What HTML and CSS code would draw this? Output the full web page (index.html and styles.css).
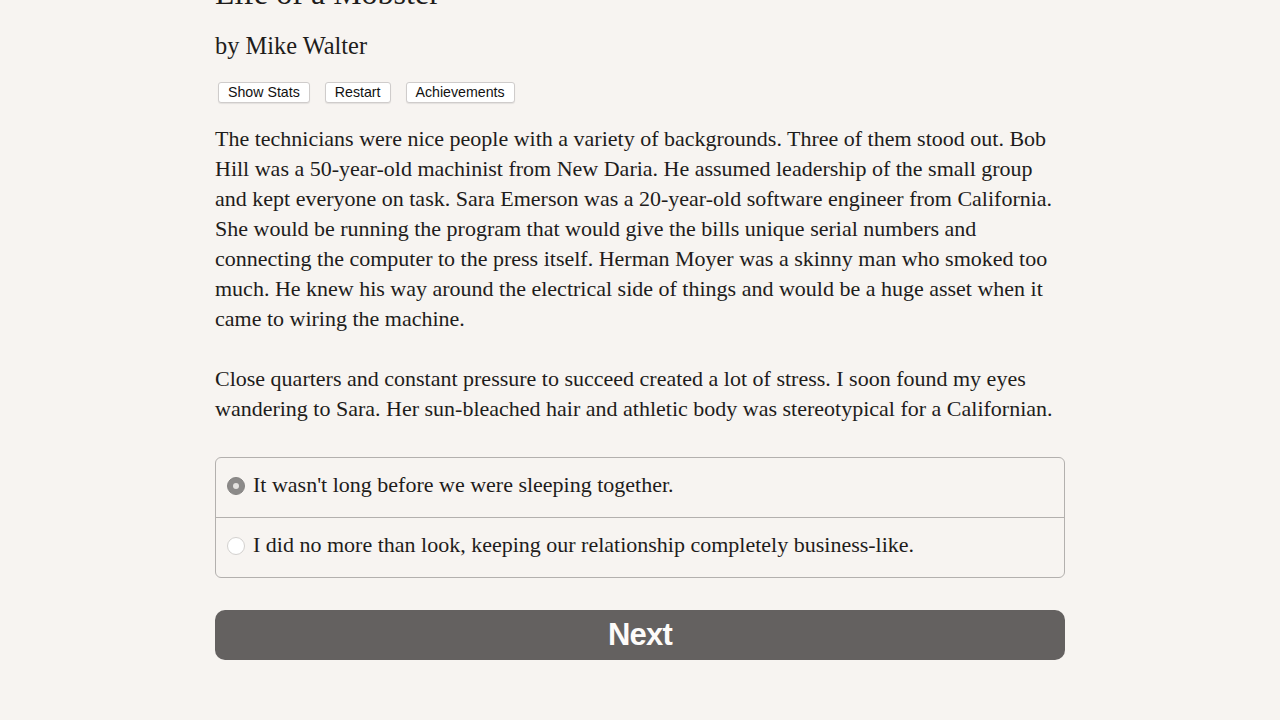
FILE: index.html
```html
<!DOCTYPE html>
<html>
<head>
<meta charset="utf-8">
<link rel="stylesheet" href="styles.css">
</head>
<body>
<div class="page">
  <h1 class="title">Life of a Mobster</h1>
  <h2 class="author">by Mike Walter</h2>
  <div class="toolbar">
    <button class="tbtn">Show Stats</button>
    <button class="tbtn">Restart</button>
    <button class="tbtn">Achievements</button>
  </div>
  <div class="story">
    <p>The technicians were nice people with a variety of backgrounds. Three of them stood out. Bob Hill was a 50-year-old machinist from New Daria. He assumed leadership of the small group and kept everyone on task. Sara Emerson was a 20-year-old software engineer from California. She would be running the program that would give the bills unique serial numbers and connecting the computer to the press itself. Herman Moyer was a skinny man who smoked too much. He knew his way around the electrical side of things and would be a huge asset when it came to wiring the machine.</p>
    <p>Close quarters and constant pressure to succeed created a lot of stress. I soon found my eyes wandering to Sara. Her sun-bleached hair and athletic body was stereotypical for a Californian.</p>
  </div>
  <div class="choices">
    <label class="choice"><span class="radio checked"></span><span>It wasn't long before we were sleeping together.</span></label>
    <label class="choice"><span class="radio"></span><span>I did no more than look, keeping our relationship completely business-like.</span></label>
  </div>
  <button class="next">Next</button>
</div>
</body>
</html>
```

FILE: styles.css
```css
html, body {
  margin: 0;
  padding: 0;
  background: #f7f4f1;
}
body {
  font-family: "Liberation Serif", serif;
  color: #1e1c1b;
}
.page {
  width: 850px;
  margin: 0 auto;
}
.title {
  font-size: 32px;
  font-weight: normal;
  margin: -25px 0 0 0;
  line-height: 36px;
  height: 36px;
}
.author {
  font-size: 24.4px;
  font-weight: normal;
  margin: 22px 0 0 0;
  line-height: 26px;
}
.toolbar {
  display: flex;
  gap: 15px;
  margin: 23px 0 0 3px;
}
.tbtn {
  font-family: "Liberation Sans", sans-serif;
  font-size: 14.2px;
  color: #111;
  background: #fff;
  border: 1px solid #cfcccb;
  border-radius: 3px;
  height: 21px;
  padding: 0 9px;
  line-height: 19px;
  box-shadow: 0 1px 1px rgba(0,0,0,0.08);
}
.story {
  margin-top: 21px;
  font-size: 22px;
  line-height: 30px;
}
.story p {
  margin: 0 0 30px 0;
}
.choices {
  border: 1px solid #b3b0ae;
  border-radius: 6px;
  margin-top: 33px;
}
.choice {
  display: flex;
  align-items: center;
  height: 59px;
  box-sizing: border-box;
  padding: 0 0 5px 11px;
  font-size: 22px;
  gap: 8px;
}
.choice + .choice {
  height: 60px;
  border-top: 1px solid #b3b0ae;
}
.radio {
  width: 18px;
  height: 18px;
  border-radius: 50%;
  background: #fff;
  border: 1px solid #d3d1cf;
  box-sizing: border-box;
  flex: none;
  margin-top: 2px;
  position: relative;
}
.radio.checked {
  background: #8c8a89;
  border-color: #858382;
}
.radio.checked::after {
  content: "";
  position: absolute;
  left: 5px;
  top: 5px;
  width: 6px;
  height: 6px;
  border-radius: 50%;
  background: #e4e2e0;
}
.next {
  display: block;
  width: 850px;
  height: 50px;
  margin-top: 32px;
  background: #646160;
  color: #fdfbf9;
  border: none;
  border-radius: 10px;
  font-family: "Liberation Sans", sans-serif;
  font-weight: bold;
  font-size: 31px;
  letter-spacing: -0.8px;
}
```
